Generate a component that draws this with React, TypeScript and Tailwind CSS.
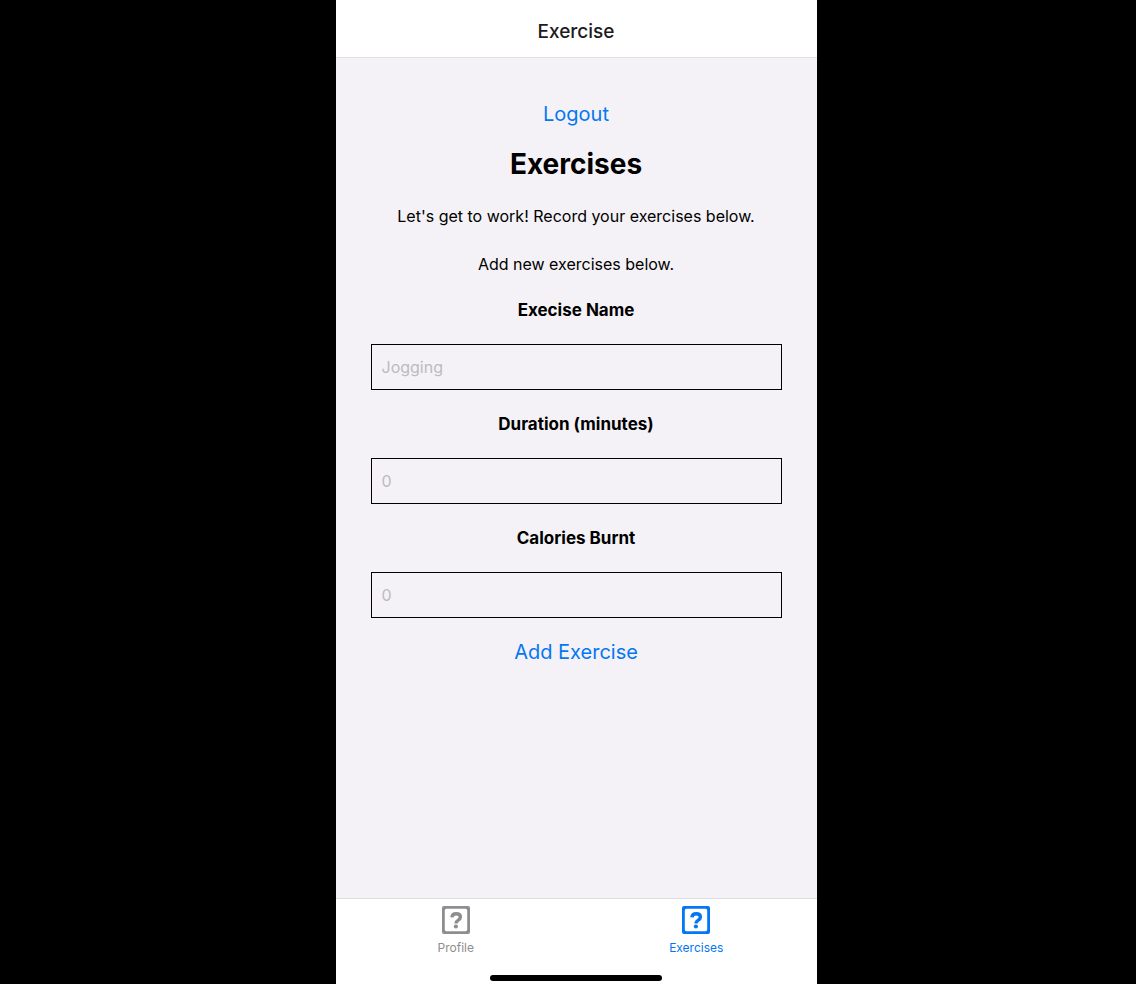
import React from "react";

type FieldProps = { id: string; label: string; placeholder: string };

function Field({ id, label, placeholder }: FieldProps) {
  return (
    <div className="flex w-full flex-col items-center gap-[22px]">
      <label htmlFor={id} className="text-[17px] leading-6 font-bold">
        {label}
      </label>
      <input
        id={id}
        type="text"
        placeholder={placeholder}
        className="h-[46px] w-full border border-black bg-transparent px-2.5 text-base outline-none placeholder:text-[#bcbbbf]"
      />
    </div>
  );
}

function TabIcon() {
  return (
    <svg viewBox="0 0 28 28" className="size-7" fill="none" aria-hidden="true">
      <path
        fillRule="evenodd"
        fill="currentColor"
        d="M2 0h24a2 2 0 0 1 2 2v24a2 2 0 0 1-2 2H2a2 2 0 0 1-2-2V2a2 2 0 0 1 2-2zM4.500 2.800a1.700 1.700 0 0 0-1.700 1.700v19a1.700 1.700 0 0 0 1.700 1.700h19a1.700 1.700 0 0 0 1.700-1.700v-19a1.700 1.700 0 0 0-1.700-1.700z"
      />
      <path
        d="M9.900 11.300c.2-2.300 1.900-3.600 4.300-3.600 2.500 0 4.200 1.300 4.200 3.300 0 1.500-.8 2.300-2.100 3.100-1.600 1-2.300 1.600-2.300 3.300"
        stroke="currentColor"
        strokeWidth="3.400"
      />
      <circle cx="13.900" cy="20.500" r="2.100" fill="currentColor" />
    </svg>
  );
}

function Tab({ label, active }: { label: string; active?: boolean }) {
  return (
    <a
      href="#"
      aria-current={active ? "page" : undefined}
      className={`flex flex-1 flex-col items-center gap-1.5 pt-[7px] ${active ? "text-[#0477f2]" : "text-[#8e8e90]"}`}
    >
      <TabIcon />
      <span className="text-xs leading-4">{label}</span>
    </a>
  );
}

export default function App() {
  return (
    <div className="flex min-h-screen justify-center bg-black pl-4 font-['Inter',sans-serif] text-black">
      <div className="flex w-full max-w-[481px] flex-col bg-[#f4f2f6]">
        <header className="flex h-[58px] items-center justify-center border-b border-[#e2e2e3] bg-white pt-1.5">
          <span className="text-[19px] leading-6 font-medium text-[#1c1c1e]">Exercise</span>
        </header>
        <main className="flex flex-1 flex-col items-center gap-[22px] px-[35px] pt-11 text-center">
          <button type="button" className="text-xl leading-6 text-[#0477f2]">
            Logout
          </button>
          <div className="flex flex-col gap-6">
            <h1 className="text-[28px] leading-8 font-bold">Exercises</h1>
            <p className="text-base leading-6">Let's get to work! Record your exercises below.</p>
            <p className="text-base leading-6">Add new exercises below.</p>
          </div>
          <Field id="name" label="Execise Name" placeholder="Jogging" />
          <Field id="duration" label="Duration (minutes)" placeholder="0" />
          <Field id="calories" label="Calories Burnt" placeholder="0" />
          <button type="button" className="text-xl leading-6 text-[#0477f2]">
            Add Exercise
          </button>
        </main>
        <footer className="border-t border-[#dedde0] bg-white">
          <nav className="flex h-[76px]">
            <Tab label="Profile" />
            <Tab label="Exercises" active />
          </nav>
          <div className="mx-auto mb-[3px] h-1.5 w-[172px] rounded-full bg-black" />
        </footer>
      </div>
    </div>
  );
}
